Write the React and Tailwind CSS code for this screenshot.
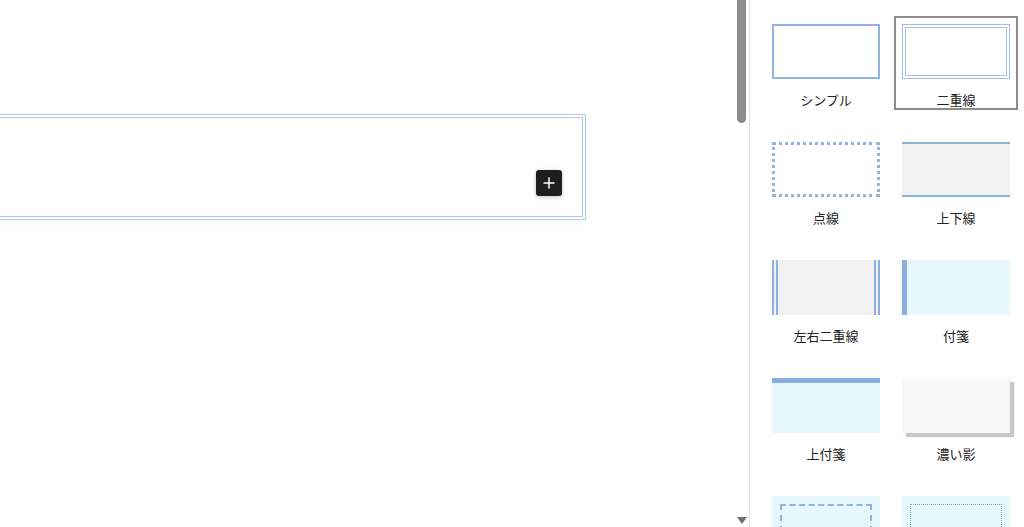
import React from "react";

const font = { fontFamily: '"Noto Sans CJK JP", "Noto Sans", sans-serif' };

const styles = [
  { label: "シンプル", preview: "bg-white border-2 border-[#93b3e2]" },
  { label: "二重線", preview: "bg-white border-[4px] border-double border-[#a3bde6]", selected: true },
  { label: "点線", preview: "bg-white border-[3px] border-dotted border-[#93b3e2]" },
  { label: "上下線", preview: "bg-[#f2f2f2] border-y-2 border-[#8eb0e0]" },
  { label: "左右二重線", preview: "bg-[#f2f2f2] border-x-[6px] border-double border-[#8eb0e0]" },
  { label: "付箋", preview: "bg-[#e6f8fe] border-l-[5px] border-[#8aaedf]" },
  { label: "上付箋", preview: "bg-[#e6f8fe] border-t-[5px] border-[#8aaedf]" },
  { label: "濃い影", preview: "bg-[#f7f7f7] shadow-[4px_4px_1px_#c8c8c8]" },
  { label: "", preview: "bg-[#e6f8fe] p-[8px]", inner: "border-2 border-dashed border-[#93b3dc]" },
  { label: "", preview: "bg-[#e6f8fe] p-[8px]", inner: "border border-dotted border-[#7fa2d8]" },
];

const StyleCard = ({ item }) => (
  <div
    className={`flex flex-col border-2 px-[6px] pt-[6px] h-[94px] ${
      item.selected ? "border-[#8c8c8c]" : "border-transparent"
    }`}
  >
    <div className={`h-[55px] w-full shrink-0 ${item.preview}`}>
      {item.inner && <div className={`h-full w-full ${item.inner}`}></div>}
    </div>
    <div className="mt-[13px] text-center text-[13px] leading-[16px] text-[#222]">{item.label}</div>
  </div>
);

const App = () => {
  return (
    <div className="flex h-[527px] w-[1024px] overflow-hidden bg-white" style={font}>
      {/* Editor canvas */}
      <div className="flex flex-1">
        <div className="flex-1 overflow-hidden pt-[114px]">
          <div className="-ml-[40px] w-[626px] h-[106px] border-[1.5px] border-[#b3c8ea] p-[2px] shadow-[0_2px_6px_rgba(0,0,0,0.04)]">
            <div className="flex h-full items-end justify-end border border-[#b3c8ea] pb-[20px] pr-[20px]">
              <button className="flex h-[26px] w-[26px] items-center justify-center rounded-[3px] bg-[#1e1e1e] shadow-[0_1px_4px_rgba(0,0,0,0.25)]">
                <svg width="14" height="14" viewBox="0 0 14 14" fill="none">
                  <path d="M7 1.5v11M1.5 7h11" stroke="white" strokeWidth="1.5" />
                </svg>
              </button>
            </div>
          </div>
        </div>
        {/* Scrollbar */}
        <div className="flex w-[13px] flex-col justify-between">
          <div className="ml-[1px] h-[123px] w-[9px] rounded-b-full bg-[#8c8c8c]"></div>
          <div className="mb-[3px] ml-[1px] h-0 w-0 border-x-[5px] border-t-[7px] border-x-transparent border-t-[#707070]"></div>
        </div>
      </div>

      {/* Block style sidebar */}
      <div className="w-[275px] shrink-0 border-l border-[#e2e2e2] pl-[14px] pt-[16px]">
        <div className="grid grid-cols-[124px_124px] gap-x-[6px] gap-y-[24px]">
          {styles.map((item, i) => (
            <StyleCard key={i} item={item} />
          ))}
        </div>
      </div>
    </div>
  );
};

export default App;
